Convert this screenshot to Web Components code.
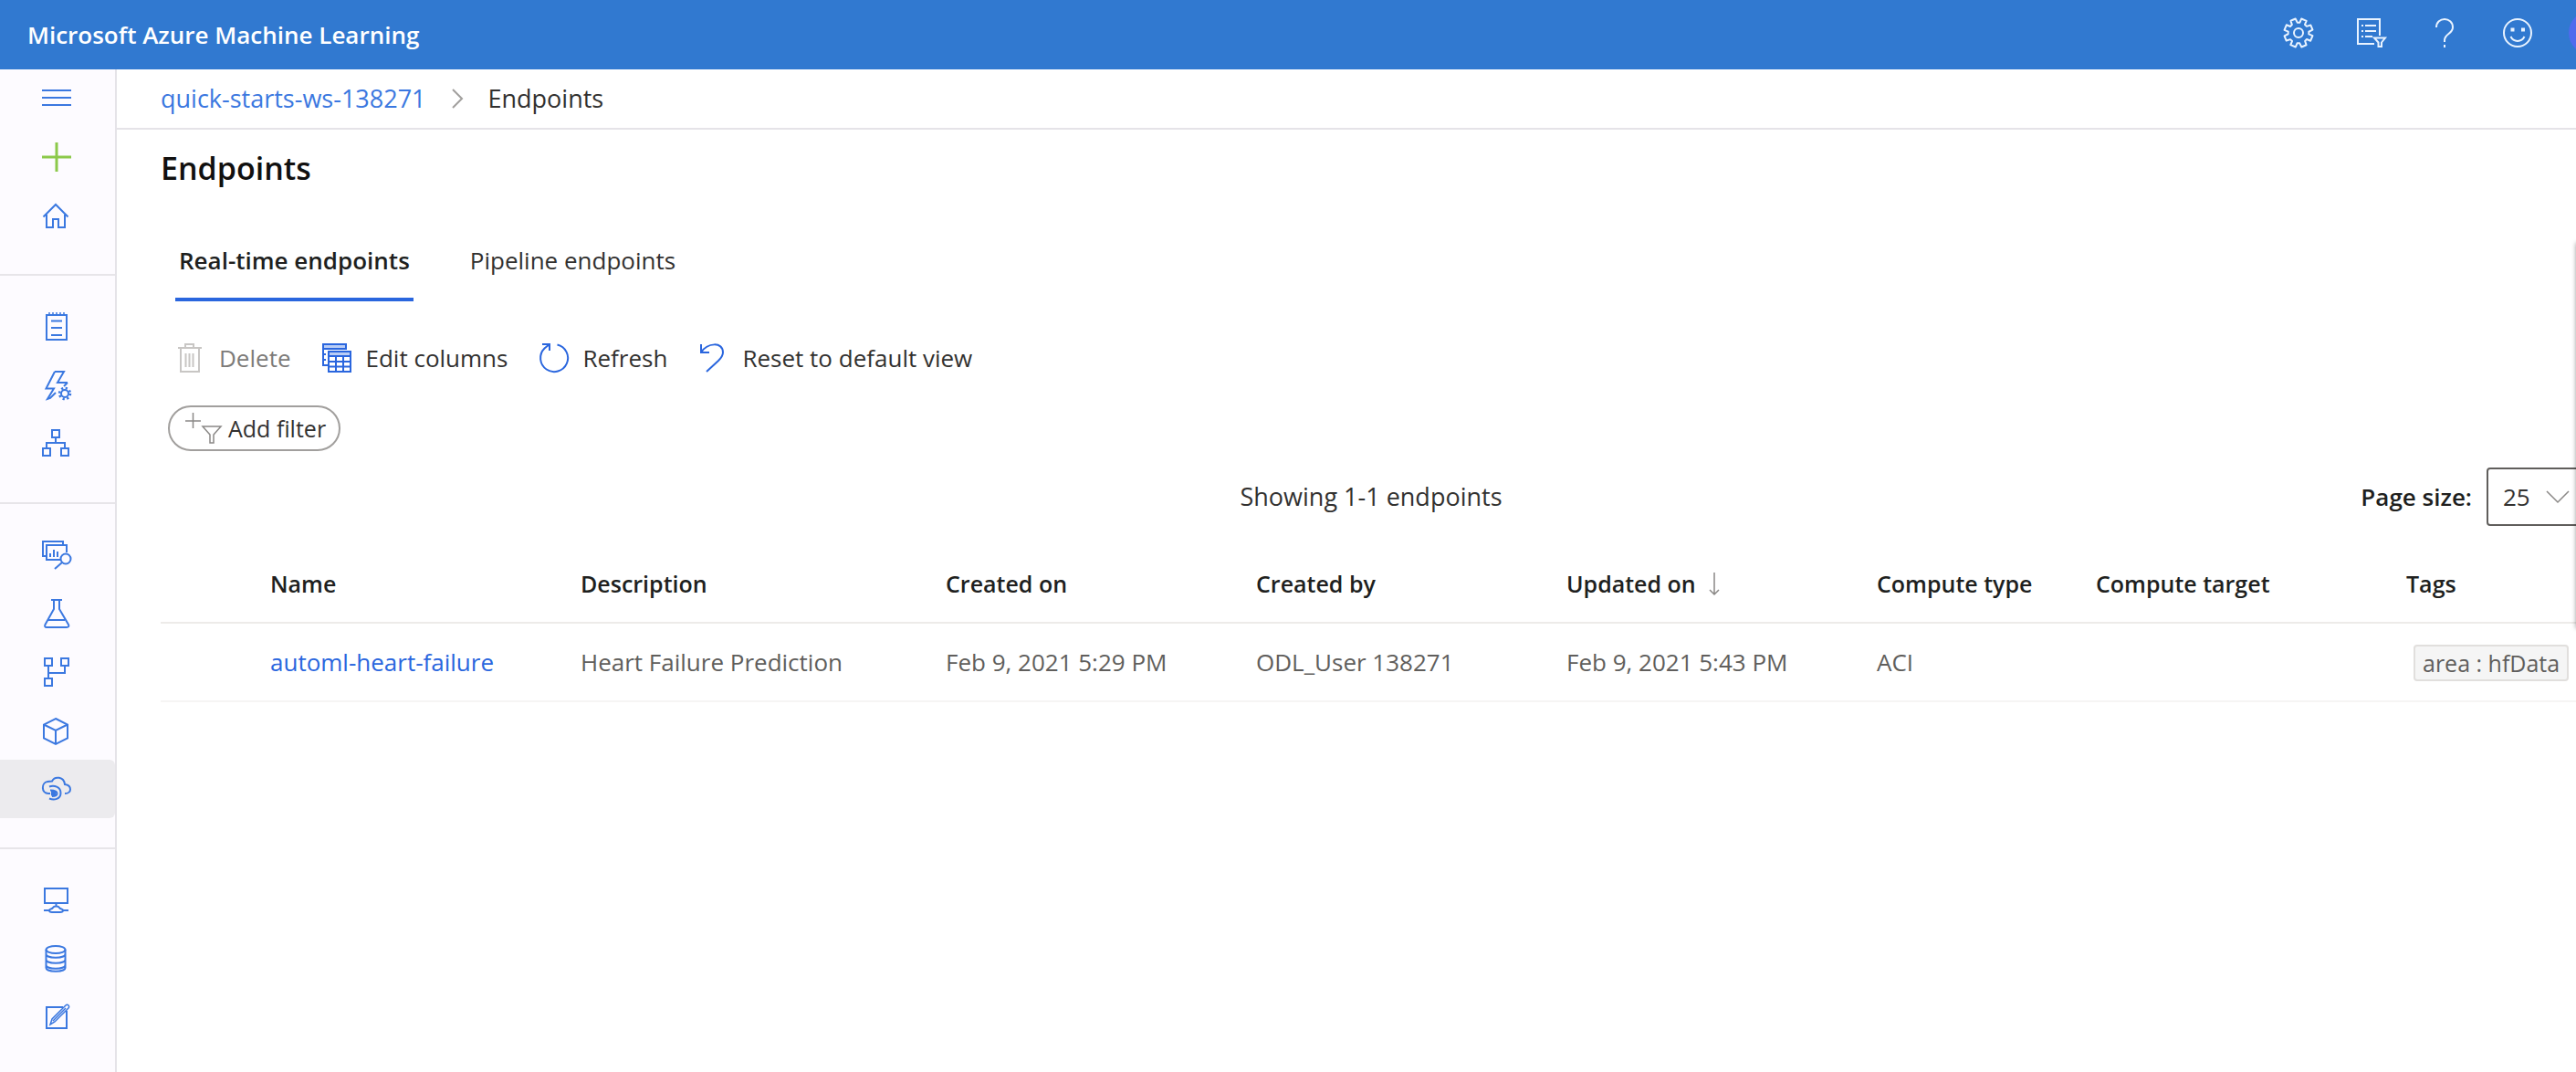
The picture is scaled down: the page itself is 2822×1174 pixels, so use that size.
<!DOCTYPE html>
<html lang="en">
<head>
<meta charset="utf-8">
<title>Endpoints - Microsoft Azure Machine Learning</title>
<style>
  html, body { margin: 0; height: 100%; }
  body {
    font-family: "Open Sans", "Noto Sans", sans-serif;
    font-size: 26px;
    line-height: 36px;
    color: #323130;
    background: #fff;
    --blue: #3b78e0;
    --accent: #2a66de;
    --line: #e5e3e8;
  }
</style>
</head>
<body>
<ml-app></ml-app>

<script>
const ICONS = {
  menu: '<path d="M0 7h32M0 15h32M0 23h32"/>',
  plus: '<path stroke-width="3" d="M0 16h32M16 0v32"/>',
  home: '<path d="M1.500 17.500 15 4l13.500 13.500M5 15v14h7v-9h6v9h7V15"/>',
  notebook: '<path d="M5 3h22v27H5zM10 9.500h12M10 17h12M10 25h12"/><path d="M8 0v4M12 0v4M16 0v4M20 0v4M24 0v4" stroke-width="1.500"/>',
  automl: '<path d="M14 1h10l-7 12h11M14 1 4.500 19.500H13L6 31l3-1 6-6M28 13l-4 4"/><circle cx="25" cy="25" r="4"/><circle cx="25" cy="25" r="6" stroke-dasharray="2.200 2.510" stroke-width="2.500"/>',
  designer: '<path d="M11 1h8v8h-8zM1 21h8v8H1zM21 21h8v8h-8zM15 9v6M5 21v-6h20v6"/>',
  datasets: '<path d="M4 17H1V1h22v4M20 21H5V5h22v8M9 14v4M13 10v8M17 12v6"/><circle cx="26" cy="20" r="5.500"/><path d="M22 24l-8 7"/>',
  flask: '<path d="M10 1h12M13 1v10L3.500 28c-1 2 0 3 1.500 3h22c2 0 3-1 2-3L19 11V1M7 23h18"/>',
  pipelines: '<path d="M3 1h8v8H3zM21 1h8v8h-8zM3 23h8v8H3zM7 9v14M7 17h18V9"/>',
  cube: '<path d="M15 3l13 6.500v15L15 31 2 24.500v-15zM2 9.500 15 16l13-6.500M15 16v15"/>',
  endpoint: '<path d="M9 21H7C-1 21-1 9 6 8c2-.5 3-.5 5-.5 3-6 13-5 14 3.500 8 1 8 10 0 10M8 13.500c5-2 12.500 0 12.500 7S13 28.500 8 26.500M9 17.500c5 0 7.500 1 7.500 3.500S14 24 11 24"/><path fill="currentColor" stroke="none" d="M10 18h5.500v5.500H10z"/>',
  compute: '<path d="M3 3h25v16H3zM15.500 19v3M2 27h6M22 27h7M8 27c0-2 3-1 4-3 1-2 6-2 7 0 1 2 4 1 4 3 0 1-1 2-3 2h-9c-2 0-3-1-3-2z"/>',
  datastore: '<ellipse cx="15" cy="6" rx="10.500" ry="4"/><path d="M4.500 6v20c0 5 21 5 21 0V6M4.500 11c0 5 21 5 21 0M4.500 17c0 5 21 5 21 0M4.500 23c0 5 21 5 21 0"/>',
  label: '<path d="M23 5H5v23h22V9"/><path stroke-width="1.500" d="M26 3c2-2 5 1 3 3L14 21l-5 3 2-6zM26 6 12 20"/>',
  gear: '<path stroke-linejoin="round" transform="rotate(22.500 16 16)" d="M13 5V.5h6V5l2.500 1L25 3l4 4-3 3.500 1 2.500h4.500v6H27l-1 2.500 3 3.500-4 4-3.500-3-2.500 1v4.500h-6V27l-2.500-1L7 29l-4-4 3-3.500L5 19H.5v-6H5l1-2.500L3 7l4-4 3.500 3z"/><circle cx="16" cy="16" r="5"/>',
  tasks: '<path d="M19 28H1V1h24v18M5 8h2M9 8h12M5 14h2M9 14h12M5 20h2M9 20h8M19 21.500h12l-4 5V31h-3.500v-4.500z"/>',
  help: '<path d="M7 10c0-12 18-12 18 0 0 7-9 7-9 14v2M16 29v3"/>',
  smile: '<circle cx="16" cy="16" r="15"/><path d="M8.500 20c3 6.500 12 6.500 15 0"/><path fill="currentColor" stroke="none" d="M8.500 10.500h4v4h-4zM20 10.500h4v4h-4z"/>',
  trash: '<path d="M3 5h26M11 5V1h9v4M6 5v26h20V5M11.500 11v15M15.500 11v15M19.500 11v15"/>',
  columns: '<path fill="#b9cdf5" d="M1 1h25v5H1z"/><path d="M1 6v18h5M1 12h3M1 18h3"/><path fill="#fff" d="M7 9h24v22H7z"/><path fill="#b9cdf5" d="M7 9h24v5H7z"/><path d="M7 20h24M7 25.500h24M15 14v17M23 14v17"/>',
  refresh: '<path d="M20.500 1.500A15 15 0 1 1 6.500 5.500L12 1M4 1h8v7"/>',
  reset: '<path d="M3 1v9h9M3 10C10-1 27-2 27 10c0 4-2 6-5 9L9 31"/>',
  filter: '<path d="M1 9h17M9.500 0v17M20 15h20L32 24v9h-4v-9z"/>',
  chevron: '<path d="M11 6l10 10-10 10"/>',
  down: '<path d="M4 10l12 12 12-12"/>',
  arrow: '<path d="M8 1v24M3 20l5 5 5-5"/>'
};

const define = (name, html, setup) => {
  const template = document.createElement('template');
  template.innerHTML = html;
  customElements.define(name, class extends HTMLElement {
    connectedCallback() {
      if (this.shadowRoot) return;
      this.attachShadow({ mode: 'open' }).append(template.content.cloneNode(true));
      if (setup) setup(this, this.shadowRoot);
    }
  });
};

/* Line icon; "box" overrides the default 32 x 32 canvas, "stroke" the line width. */
define('ml-icon', `
  <style>
    :host { display: block; flex: none; }
    svg { display: block; fill: none; stroke: currentColor; overflow: visible; }
  </style>
  <svg aria-hidden="true"></svg>`, (host, root) => {
  const [w, h] = (host.getAttribute('box') || '32 32').split(' ');
  const svg = root.querySelector('svg');
  svg.setAttribute('viewBox', '0 0 ' + w + ' ' + h);
  svg.setAttribute('width', w);
  svg.setAttribute('height', h);
  svg.setAttribute('stroke-width', host.getAttribute('stroke') || '2');
  svg.innerHTML = ICONS[host.getAttribute('name')];
});

define('ml-header-button', `
  <style>
    :host { display: flex; width: 80px; }
    button { flex: 1; display: flex; justify-content: center; align-items: center; padding: 0 0 4px; border: 0; background: none; color: #e9f3ff; }
  </style>
  <button><slot></slot></button>`, (host, root) =>
  root.querySelector('button').setAttribute('aria-label', host.getAttribute('label')));

define('ml-header', `
  <style>
    :host { display: flex; justify-content: space-between; height: 76px; background: #3179d0; overflow: hidden; }
    .brand { padding: 0 30px; font-weight: 600; line-height: 76px; color: #fff; white-space: nowrap; }
    nav { display: flex; margin-right: -56px; }
    .avatar { width: 48px; height: 48px; border-radius: 50%; background: #4f6bed; }
  </style>
  <div class="brand">Microsoft Azure Machine Learning</div>
  <nav aria-label="Account">
    <ml-header-button label="Settings"><ml-icon name="gear"></ml-icon></ml-header-button>
    <ml-header-button label="Tasks"><ml-icon name="tasks"></ml-icon></ml-header-button>
    <ml-header-button label="Help"><ml-icon name="help"></ml-icon></ml-header-button>
    <ml-header-button label="Feedback"><ml-icon name="smile"></ml-icon></ml-header-button>
    <ml-header-button label="Profile"><span class="avatar"></span></ml-header-button>
  </nav>`);

define('ml-nav-item', `
  <style>
    :host { display: block; }
    a { display: flex; align-items: center; height: 64px; padding-left: 46px; color: var(--blue); border-radius: 0 6px 6px 0; }
    :host([selected]) a { background: #ecebee; }
    :host([name="plus"]) a { color: #8cc94a; }
  </style>
  <a href="#"><ml-icon></ml-icon></a>`, (host, root) => {
  root.querySelector('a').setAttribute('aria-label', host.getAttribute('label'));
  const icon = document.createElement('ml-icon');
  icon.setAttribute('name', host.getAttribute('name'));
  root.querySelector('ml-icon').replaceWith(icon);
});

define('ml-sidebar', `
  <style>
    :host { display: block; flex: none; width: 126px; border-right: 2px solid var(--line); background: #fdfbff; }
    hr { height: 2px; margin: 32px 0 24px; border: 0; background: #e7e5e9; }
  </style>
  <nav aria-label="Main">
    <ml-nav-item name="menu" label="Menu"></ml-nav-item>
    <ml-nav-item name="plus" label="New"></ml-nav-item>
    <ml-nav-item name="home" label="Home"></ml-nav-item>
    <hr>
    <ml-nav-item name="notebook" label="Notebooks"></ml-nav-item>
    <ml-nav-item name="automl" label="Automated ML"></ml-nav-item>
    <ml-nav-item name="designer" label="Designer"></ml-nav-item>
    <hr>
    <ml-nav-item name="datasets" label="Datasets"></ml-nav-item>
    <ml-nav-item name="flask" label="Experiments"></ml-nav-item>
    <ml-nav-item name="pipelines" label="Pipelines"></ml-nav-item>
    <ml-nav-item name="cube" label="Models"></ml-nav-item>
    <ml-nav-item name="endpoint" label="Endpoints" selected></ml-nav-item>
    <hr>
    <ml-nav-item name="compute" label="Compute"></ml-nav-item>
    <ml-nav-item name="datastore" label="Datastores"></ml-nav-item>
    <ml-nav-item name="label" label="Data labeling"></ml-nav-item>
  </nav>`);

define('ml-breadcrumb', `
  <style>
    :host { display: block; border-bottom: 2px solid var(--line); font-size: 27px; }
    nav { display: flex; align-items: center; height: 64px; padding-left: 48px; gap: 18px; }
    a { color: var(--blue); text-decoration: none; }
    ml-icon { color: #a19f9d; }
  </style>
  <nav aria-label="Breadcrumb">
    <a href="#">quick-starts-ws-138271</a>
    <ml-icon name="chevron"></ml-icon>
    <span aria-current="page">Endpoints</span>
  </nav>`);

define('ml-tab', `
  <style>
    :host { display: block; }
    button { display: block; height: 88px; padding: 2px 4px 0; border: 0; border-bottom: 4px solid transparent; background: none; font: inherit; color: inherit; white-space: nowrap; }
    :host([selected]) button { border-color: var(--accent); font-weight: 600; color: #201f1e; }
  </style>
  <button role="tab"><slot></slot></button>`, (host, root) =>
  root.querySelector('button').setAttribute('aria-selected', host.hasAttribute('selected')));

define('ml-command', `
  <style>
    :host { display: block; }
    button { display: flex; align-items: center; gap: 16px; height: 64px; padding: 0; border: 0; background: none; font: inherit; color: inherit; white-space: nowrap; }
    ml-icon { color: var(--accent); }
    button:disabled { color: #7d7b79; }
    button:disabled ml-icon { color: #c8c6c4; }
  </style>
  <button><slot></slot></button>`, (host, root) => {
  const button = root.querySelector('button');
  const icon = document.createElement('ml-icon');
  icon.setAttribute('name', host.getAttribute('icon'));
  button.prepend(icon);
  button.disabled = host.hasAttribute('disabled');
});

define('ml-filter-pill', `
  <style>
    :host { display: flex; }
    button { display: flex; align-items: center; gap: 8px; height: 50px; padding: 0 14px 0 16px; border: 2px solid #a19f9d; border-radius: 25px; background: #fff; font: inherit; font-size: 25px; color: inherit; white-space: nowrap; }
    ml-icon { color: #8a8886; }
  </style>
  <button><ml-icon name="filter" box="40 34" stroke="1.500"></ml-icon><slot></slot></button>`);

define('ml-page-size', `
  <style>
    :host { display: flex; align-items: center; justify-content: flex-end; gap: 16px; }
    label { font-weight: 600; color: #201f1e; white-space: nowrap; }
    .box { display: grid; align-items: center; width: 104px; height: 64px; box-sizing: border-box; border: 2px solid #605e5c; border-radius: 4px; }
    select, ml-icon { grid-area: 1 / 1; }
    select { appearance: none; height: 60px; padding: 0 40px 0 16px; border: 0; background: none; font: inherit; color: inherit; }
    ml-icon { justify-self: end; padding-right: 8px; color: #8a8886; pointer-events: none; }
  </style>
  <label for="size">Page size:</label>
  <span class="box"><select id="size"><option>25</option><option>50</option></select><ml-icon name="down" stroke="1.500"></ml-icon></span>`);

define('ml-tag', `
  <style>
    :host { display: inline-block; margin-left: 8px; padding: 0 8px; border: 2px solid #e1dfdd; border-radius: 4px; background: #f5f5f5; color: #605e5c; font-size: 25px; line-height: 36px; vertical-align: middle; }
  </style>
  <slot></slot>`);

define('ml-endpoint-table', `
  <style>
    :host { display: block; }
    table { width: 100%; border-collapse: collapse; table-layout: fixed; }
    th, td { box-sizing: border-box; padding: 0; text-align: left; white-space: nowrap; }
    th { height: 86px; font-size: 25px; font-weight: 600; color: #201f1e; border-bottom: 2px solid #edebe9; }
    td { height: 86px; color: #605e5c; border-bottom: 2px solid #f6f5f4; }
    a { color: var(--accent); text-decoration: none; }
    .sort { display: flex; align-items: center; gap: 12px; }
    .sort ml-icon { color: #8a8886; }
    .check { width: 120px; } .std { width: 340px; } .wide { width: 400px; } .short { width: 240px; }
  </style>
  <table>
    <colgroup><col class="check"><col class="std"><col class="wide"><col class="std"><col class="std"><col class="std"><col class="short"><col class="std"><col></colgroup>
    <thead><tr>
      <th></th><th>Name</th><th>Description</th><th>Created on</th><th>Created by</th>
      <th aria-sort="descending"><span class="sort">Updated on <ml-icon name="arrow" box="16 26" stroke="1.500"></ml-icon></span></th>
      <th>Compute type</th><th>Compute target</th><th>Tags</th>
    </tr></thead>
    <tbody><tr>
      <td></td><td><a href="#">automl-heart-failure</a></td><td>Heart Failure Prediction</td><td>Feb 9, 2021 5:29 PM</td><td>ODL_User 138271</td>
      <td>Feb 9, 2021 5:43 PM</td><td>ACI</td><td></td><td><ml-tag>area : hfData</ml-tag></td>
    </tr></tbody>
  </table>`);

define('ml-endpoints-page', `
  <style>
    /* The list is slightly wider than the view and runs under its right edge. */
    :host { display: block; padding-left: 48px; margin-right: -6px; }
    h1 { margin: 0; padding: 18px 0 12px; font-size: 34px; line-height: 48px; font-weight: 600; color: #11100f; }
    .tabs { display: flex; gap: 58px; padding: 22px 0 0 16px; }
    .commands { display: flex; gap: 34px; padding: 30px 0 0 16px; }
    ml-filter-pill { padding: 20px 0 18px 8px; }
    .summary { display: grid; grid-template-columns: 1fr auto 1fr; align-items: center; padding-bottom: 20px; }
    .count { grid-column: 2; font-size: 27px; }
  </style>
  <h1>Endpoints</h1>
  <div class="tabs" role="tablist">
    <ml-tab selected>Real-time endpoints</ml-tab>
    <ml-tab>Pipeline endpoints</ml-tab>
  </div>
  <div class="commands">
    <ml-command icon="trash" disabled>Delete</ml-command>
    <ml-command icon="columns">Edit columns</ml-command>
    <ml-command icon="refresh">Refresh</ml-command>
    <ml-command icon="reset">Reset to default view</ml-command>
  </div>
  <ml-filter-pill>Add filter</ml-filter-pill>
  <div class="summary">
    <span class="count">Showing 1-1 endpoints</span>
    <ml-page-size></ml-page-size>
  </div>
  <ml-endpoint-table></ml-endpoint-table>`);

define('ml-app', `
  <style>
    :host { display: flex; flex-direction: column; min-height: 100%; }
    .body { flex: 1; display: flex; }
    main { flex: 1; min-width: 0; overflow: hidden; position: relative; }
    /* Shadow cast by the collapsed side panel beyond the right edge. */
    .panel { position: absolute; top: 190px; right: -10px; width: 10px; height: 422px; box-shadow: 0 0 5px rgba(0, 0, 0, .4); }
  </style>
  <ml-header></ml-header>
  <div class="body">
    <ml-sidebar></ml-sidebar>
    <main>
      <ml-breadcrumb></ml-breadcrumb>
      <ml-endpoints-page></ml-endpoints-page>
      <div class="panel"></div>
    </main>
  </div>`);
</script>
</body>
</html>
